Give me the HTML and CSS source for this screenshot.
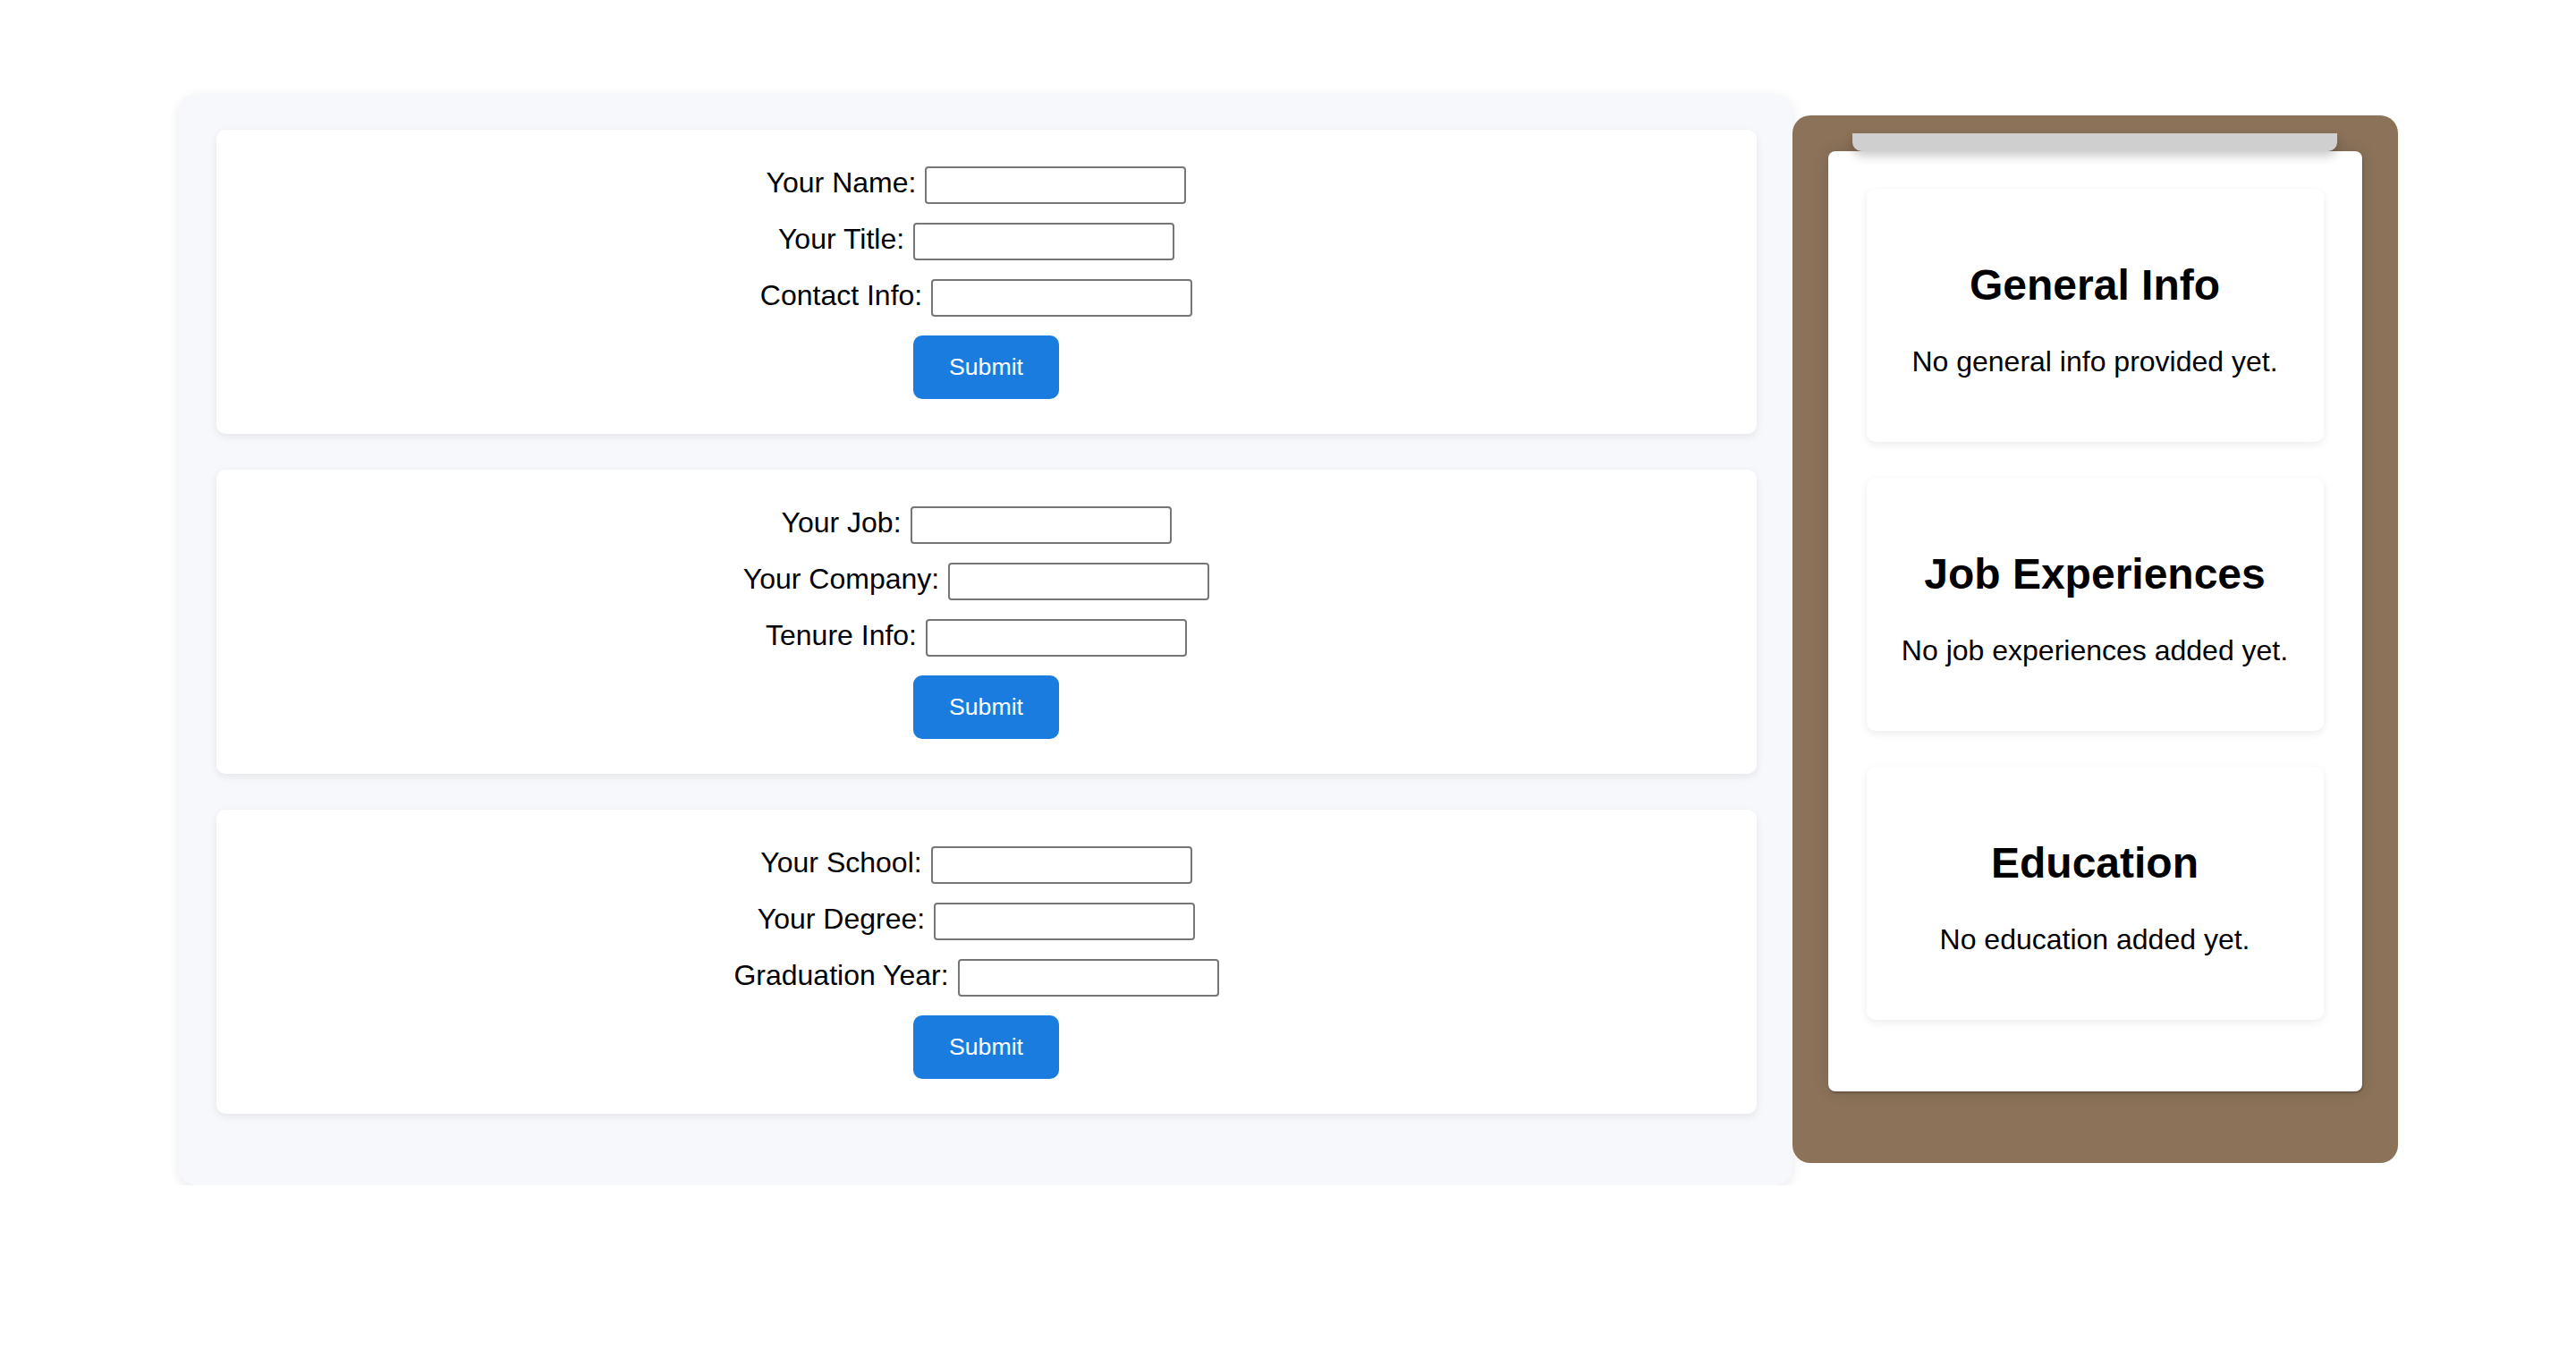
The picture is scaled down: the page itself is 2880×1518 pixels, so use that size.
FILE: index.html
```html
<!DOCTYPE html>
<html lang="en">
<head>
<meta charset="utf-8">
<title>CV Builder</title>
<link rel="stylesheet" href="styles.css">
</head>
<body>
<div class="page">
  <section class="forms">
    <form class="form-card">
      <div class="row"><label>Your Name:</label><input type="text"></div>
      <div class="row"><label>Your Title:</label><input type="text"></div>
      <div class="row"><label>Contact Info:</label><input type="text"></div>
      <button type="button" class="submit">Submit</button>
    </form>
    <form class="form-card">
      <div class="row"><label>Your Job:</label><input type="text"></div>
      <div class="row"><label>Your Company:</label><input type="text"></div>
      <div class="row"><label>Tenure Info:</label><input type="text"></div>
      <button type="button" class="submit">Submit</button>
    </form>
    <form class="form-card">
      <div class="row"><label>Your School:</label><input type="text"></div>
      <div class="row"><label>Your Degree:</label><input type="text"></div>
      <div class="row"><label>Graduation Year:</label><input type="text"></div>
      <button type="button" class="submit">Submit</button>
    </form>
  </section>
  <aside class="clipboard">
    <div class="clip"></div>
    <div class="paper">
      <div class="cv-card">
        <h2>General Info</h2>
        <p>No general info provided yet.</p>
      </div>
      <div class="cv-card">
        <h2>Job Experiences</h2>
        <p>No job experiences added yet.</p>
      </div>
      <div class="cv-card">
        <h2>Education</h2>
        <p>No education added yet.</p>
      </div>
    </div>
  </aside>
</div>
</body>
</html>
```
FILE: styles.css
```css
* { box-sizing: border-box; }

html, body {
  margin: 0;
  background: #ffffff;
  font-family: "Liberation Sans", Arial, Helvetica, sans-serif;
  color: #000;
}

.page {
  display: flex;
  justify-content: center;
  align-items: flex-start;
  padding-top: 105px;
}

.forms {
  width: 1804px;
  background: #f7f8fc;
  border-radius: 20px;
  padding: 40px 40px 40px 42px;
  box-shadow: 0 4px 14px rgba(0, 0, 0, 0.09);
}

.form-card {
  background: #ffffff;
  border-radius: 10px;
  box-shadow: 0 3px 10px rgba(0, 0, 0, 0.08);
  margin: 0 0 40px 0;
  padding: 41px 0 39px;
  display: flex;
  flex-direction: column;
  align-items: center;
  gap: 21px;
}

.row {
  display: flex;
  align-items: center;
  gap: 10px;
  padding-right: 22px;
  height: 42px;
}

.row label {
  font-size: 32px;
  margin-bottom: 6px;
}

.row input {
  width: 292px;
  height: 42px;
  border: 2px solid #767676;
  border-radius: 4px;
  background: #fff;
  font-size: 26px;
  padding: 2px 6px;
}

.submit {
  background: #1b7ce0;
  color: #ffffff;
  border: none;
  border-radius: 10px;
  font-family: "Liberation Sans", Arial, Helvetica, sans-serif;
  font-size: 26.67px;
  padding: 20px 40px;
  width: 163px;
  line-height: normal;
}

.clipboard {
  width: 677px;
  margin-top: 24px;
  background: #8b7259;
  border-radius: 20px;
  padding: 40px 40px 80px;
  position: relative;
}

.clip {
  position: absolute;
  top: 20px;
  left: 10%;
  width: 80%;
  height: 20px;
  background: #cfcfcf;
  border-radius: 0 0 10px 10px;
  box-shadow: 0 5px 12px rgba(0, 0, 0, 0.22);
  z-index: 2;
}

.paper {
  background: #ffffff;
  border-radius: 8px;
  padding: 42px 43px 40px;
  box-shadow: 1px 2px 2px rgba(0, 0, 0, 0.22), 0 0 18px rgba(0, 0, 0, 0.12);
}

.cv-card {
  background: #ffffff;
  border-radius: 10px;
  box-shadow: 0 3px 10px rgba(0, 0, 0, 0.08);
  padding: 40px 20px 39px;
  margin-bottom: 40px;
  text-align: center;
}

.cv-card h2 {
  font-size: 48px;
  font-weight: bold;
  margin: 40px 0;
  line-height: normal;
}

.cv-card p {
  font-size: 32px;
  margin: 0 0 32px;
  line-height: normal;
}
```
